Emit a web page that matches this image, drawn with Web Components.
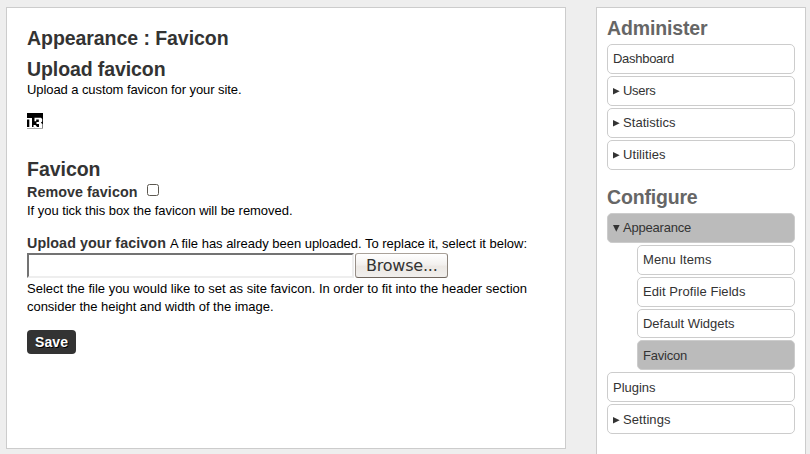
<!DOCTYPE html>
<html lang="en">
<head>
<meta charset="utf-8">
<title>Appearance : Favicon</title>
<style>
body { margin: 0; background: #eee; font: 13px/18px "Liberation Sans", Arial, sans-serif; color: #000; height: 454px; overflow: hidden; }
</style>
</head>
<body>
<admin-page></admin-page>
<script>
const define = (name, html, init) => customElements.define(name, class extends HTMLElement {
  constructor() {
    super();
    this.attachShadow({ mode: 'open' }).innerHTML = html;
  }
  connectedCallback() { if (init) init.call(this, this.shadowRoot); }
});

// One line of text, tracked so that it fills the width in its "w" attribute.
define('text-run', `<style>:host{display:inline-block;white-space:nowrap}span{display:inline-block}</style><span><slot></slot></span>`, function (root) {
  const span = root.querySelector('span');
  const w = parseFloat(this.getAttribute('w'));
  const n = this.textContent.length;
  if (w && n) {
    span.style.letterSpacing = (w - span.getBoundingClientRect().width) / n + 'px';
    this.style.width = w + 'px';
  }
});

define('page-heading', `<style>:host{display:block;font-size:19.5px;line-height:24px;height:24px;font-weight:bold;color:#333}</style><slot></slot>`);

define('field-label', `<style>:host{display:inline-block;font-size:14.3px;font-weight:bold;color:#333}</style><slot></slot>`);

define('site-favicon', `<style>:host{display:block;width:16px;height:16px}svg{display:block}</style>
<svg width="16" height="16" viewBox="0 0 16 16"><rect width="16" height="16" fill="#000"/>
<path d="M0 5H5V14H7V15.5H0V14H2.3V6.5H0Z" fill="#fff"/>
<path d="M7.5 4.7H14L15.2 6V8.5L13.8 9.7L15.5 11V15.5H8L6.5 14V12H8.5L10 14H12V11H9.5V9H11.8V6.5H9.2V8.2H7.5Z" fill="#fff"/>
<path d="M0 15.5H16" stroke="#aaa"/></svg>`);

define('check-box', `<style>:host{display:inline-block;box-sizing:border-box;width:12px;height:12px;border:1px solid #5c5850;border-radius:2.5px;background:#fff}</style>`);

define('file-picker', `<style>
:host{display:flex;gap:1px;height:25px}
.path{box-sizing:border-box;width:327px;background:#fff;border:2px solid;border-color:#737373 #eee #eee #737373}
.browse{box-sizing:border-box;width:93px;height:25px;border:1px solid #857d76;border-color:#aaa29a #8c847c #70675f #968e87;border-radius:3px;background:linear-gradient(#fff,#f3f1ef 45%,#ece8e4 55%,#f1efed);color:#333;font:16px/23px "DejaVu Sans",sans-serif;padding:0 0 0 10px;white-space:nowrap}
</style><div class="path"></div><div class="browse"><text-run w="71.5">Browse...</text-run></div>`);

define('save-button', `<style>:host{display:block;box-sizing:border-box;width:49px;height:24px;padding-left:8px;border-radius:4px;background:#333;color:#fff;font-weight:bold;font-size:14px;line-height:24px;text-shadow:1px 1px 0 #000}</style><slot></slot>`);

define('nav-item', `<style>
:host{display:flex;box-sizing:border-box;height:30px;padding:0 5px;border:1px solid #ccc;border-radius:5px;background:#fff;color:#333;line-height:28px}
:host([child]){margin-left:30px}
:host([short]){height:29px}
:host([low]){padding-top:1px}
:host([current]){background:#bbb}
svg{display:none;width:7px;height:7px;margin:11px 3px 0 0;fill:#333}
:host([closed]) .closed,:host([open]) .open{display:block}
</style>
<svg class="closed" viewBox="0 0 7 7"><path d="M0 0L6.7 3.3L0 6.5Z"/></svg>
<svg class="open" viewBox="0 0 7 7"><path d="M0 0H6.6L3.3 6.8Z"/></svg><slot></slot>`);

define('nav-group', `<style>
:host{display:flex;flex-direction:column;gap:2px}
.title{font-size:19.5px;line-height:24px;height:26px;font-weight:bold;color:#666}
</style><div class="title"><slot name="title"></slot></div><slot></slot>`);

define('content-panel', `<style>
:host{display:block;box-sizing:border-box;width:560px;height:442px;border:1px solid #ccc;background:#fff;padding:18px 20px}
.line{display:flex;align-items:baseline;height:18px}
</style>
<page-heading><text-run w="201.5">Appearance : Favicon</text-run></page-heading>
<page-heading style="margin-top:7px"><text-run w="138.5">Upload favicon</text-run></page-heading>
<div class="line"><text-run w="214.5">Upload a custom favicon for your site.</text-run></div>
<site-favicon style="margin-top:14px"></site-favicon>
<page-heading style="margin-top:28px"><text-run w="73.5">Favicon</text-run></page-heading>
<div class="line" style="margin-top:2px"><field-label><text-run w="110.5">Remove favicon</text-run></field-label><check-box style="margin:1px 0 0 9.5px;align-self:flex-start"></check-box></div>
<div class="line" style="margin-top:1px"><text-run w="265.5">If you tick this box the favicon will be removed.</text-run></div>
<div class="line" style="margin-top:14px"><field-label><text-run w="139">Upload your facivon</text-run></field-label><text-run w="357" style="margin-left:4px">A file has already been uploaded. To replace it, select it below:</text-run></div>
<file-picker style="margin-top:1px"></file-picker>
<div class="line" style="margin-top:2px"><text-run w="500">Select the file you would like to set as site favicon. In order to fit into the header section</text-run></div>
<div class="line"><text-run w="246.5">consider the height and width of the image.</text-run></div>
<save-button style="margin-top:14px"><text-run w="33">Save</text-run></save-button>`);

define('side-panel', `<style>
:host{display:flex;flex-direction:column;gap:15px;box-sizing:border-box;width:210px;height:460px;border:1px solid #ccc;background:#fff;padding:8px 10px}
</style>
<nav-group><text-run slot="title" w="100.5">Administer</text-run>
<nav-item><text-run w="61">Dashboard</text-run></nav-item>
<nav-item closed><text-run w="32.5">Users</text-run></nav-item>
<nav-item closed><text-run w="52.5">Statistics</text-run></nav-item>
<nav-item closed><text-run w="42.5">Utilities</text-run></nav-item></nav-group>
<nav-group><text-run slot="title" w="90.5">Configure</text-run>
<nav-item open current><text-run w="68">Appearance</text-run></nav-item>
<nav-item child><text-run w="68.5">Menu Items</text-run></nav-item>
<nav-item child><text-run w="102.5">Edit Profile Fields</text-run></nav-item>
<nav-item child short><text-run w="91.5">Default Widgets</text-run></nav-item>
<nav-item child current low><text-run w="44">Favicon</text-run></nav-item>
<nav-item low><text-run w="42.5">Plugins</text-run></nav-item>
<nav-item closed low><text-run w="47.5">Settings</text-run></nav-item></nav-group>`);

define('admin-page', `<style>:host{display:flex;gap:30px;align-items:flex-start;padding:7px 0 0 6px}content-panel,side-panel{flex:none}</style>
<content-panel></content-panel><side-panel></side-panel>`);
</script>
</body>
</html>
